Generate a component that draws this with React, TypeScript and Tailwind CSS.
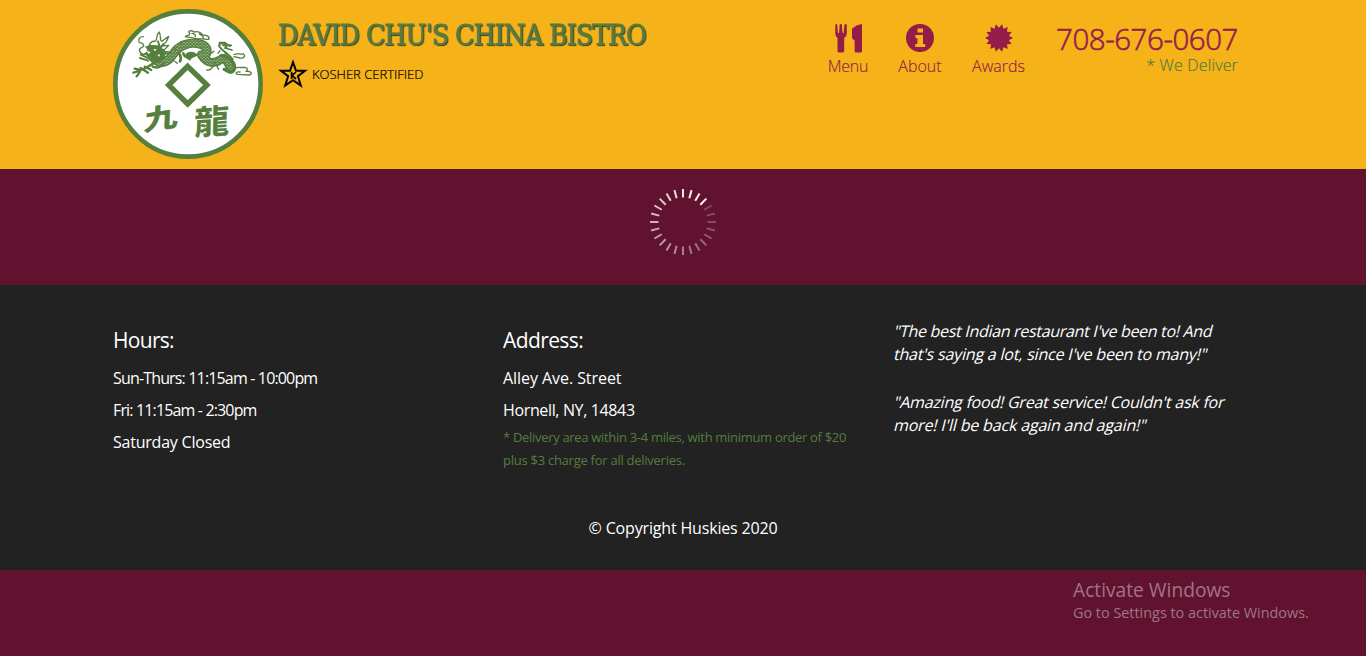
const BODY = 'M128 148 C150 190 178 178 196 150 C212 124 246 112 276 120 C304 128 300 146 288 160';
const TAIL = 'M280 152 C298 182 322 178 336 168 C352 156 362 176 368 196';

function Logo() {
  return (
    <svg className="block h-[150px] w-[150px]" viewBox="15 15 450 450">
      <defs>
        <pattern id="scales" width="10" height="9" patternUnits="userSpaceOnUse">
          <rect width="10" height="9" fill="#567f3e" />
          <circle cx="2.5" cy="2.5" r="1.5" fill="#fff" />
          <circle cx="7.5" cy="7" r="1.5" fill="#fff" />
        </pattern>
      </defs>
      <circle cx="240" cy="240" r="218" fill="#fff" stroke="#567f3e" strokeWidth="14" />
      <g fill="none" stroke="#567f3e" strokeLinecap="round" strokeLinejoin="round">
        <path d={BODY} strokeWidth="28" />
        <path d={TAIL} strokeWidth="27" />
        <path d={BODY} stroke="url(#scales)" strokeWidth="20" />
        <path d={TAIL} stroke="url(#scales)" strokeWidth="18" />
        <path d="M340 154 C366 162 384 176 379 196 C376 206 362 206 348 196" strokeWidth="9" />
        <path d="M374 166 C362 150 344 142 333 126 C336 112 352 116 366 126" strokeWidth="6" />
        <path d="M334 116 l18 0 M344 124 l26 0 M350 132 l22 6 M348 120 l10 14" strokeWidth="5" />
        <path d="M108 152 C92 146 90 134 102 130 C112 126 106 116 94 116 C88 106 96 98 106 98" strokeWidth="4" />
        <path d="M122 128 C126 116 132 110 142 112 C150 106 142 92 154 84 C160 98 154 110 162 112 L182 97 C178 112 170 120 160 126 L182 124 C174 134 168 136 164 142 L184 144" strokeWidth="4" />
        <path d="M114 128 L132 124 L152 126 L172 142 L168 166 L146 176 L128 168 L130 158 L108 150 L122 142 Z" fill="#567f3e" strokeWidth="3" />
        <path d="M98 152 l30 14 M96 162 l24 8 M152 152 l28 -4 M150 112 l6 20 M166 120 l-12 16" strokeWidth="6" />
        <path d="M232 98 C238 94 248 94 244 86 C238 80 250 78 258 84 C270 80 282 88 284 94 C296 92 306 98 302 106 C288 108 272 102 262 104 C252 98 244 102 232 98 Z M252 88 q12 2 10 10 M274 90 q12 4 12 12" strokeWidth="4" />
        <path d="M378 152 C386 146 396 152 406 150 C414 156 408 164 396 162 L378 158 M382 192 C392 188 404 192 410 190 C420 190 420 198 414 202 C428 200 436 210 424 213 L388 211 C380 208 386 202 396 204" strokeWidth="4" />
        <path d="M146 174 C130 176 120 196 94 198 M80 194 l16 4 M76 206 l18 -5 M86 217 l10 -14 M98 192 l22 14 M110 188 l20 10 M134 188 q20 8 32 -10" strokeWidth="7" />
        <path d="M212 146 q10 14 4 26 M226 148 q4 12 12 10" strokeWidth="8" />
        <path d="M318 180 q-6 20 -22 18 M320 174 l12 22 M308 148 l10 -6 M330 148 l6 -8 M348 154 l8 -8 M202 140 l-4 -10 M220 120 l-2 -8 M200 172 l8 6" strokeWidth="4" />
      </g>
      <path d="M230 160 C230 142 256 136 270 154 C260 160 252 160 246 170 Z" fill="#567f3e" />
      <path d="M114 140 l14 4 l-6 6 Z M136 135 l10 1 l-5 6 Z M148 154 l8 -4 l-2 8 Z" fill="#fff" />
      <path d="M239 187 L297 243 L239 300 L182 243 Z" fill="#fff" stroke="#567f3e" strokeWidth="16" />
      <g
        className="font-['Noto_Sans_CJK_TC',sans-serif] text-[104px] font-bold"
        fill="#567f3e"
        stroke="#567f3e"
        strokeLinejoin="round"
      >
        <text transform="translate(107 380) rotate(-9) skewX(-12) scale(.98 .78)" strokeWidth="2.5">
          九
        </text>
        <text transform="translate(258 393) rotate(-4) skewX(-5) scale(1.02 .96)" strokeWidth="0.5">
          龍
        </text>
      </g>
    </svg>
  );
}

function KosherStar() {
  return (
    <svg className="h-[30px] w-[30px] shrink-0" viewBox="0 0 30 30">
      <path
        d="M15 3.2 L18 11.8 H27 L19.9 17.2 L22.8 26.6 L15 21.2 L7.2 26.6 L10.1 17.2 L3 11.8 H12 Z"
        fill="none"
        stroke="#000"
        strokeWidth="2"
      />
      <path d="M13.6 12.8 V20 M18 13.2 L14 16.4 L18 20" fill="none" stroke="#000" strokeWidth="1.7" />
    </svg>
  );
}

function CutleryIcon() {
  return (
    <svg className="h-[30px] w-[28px]" viewBox="0 0 28 30" fill="#951c49">
      <path d="M0.3 1.5 Q1.2 .5 2.2 1.5 L2.9 9.8 Q3.5 10.6 4.1 9.8 L4.7 1.5 Q5.8 .5 6.9 1.5 L7.5 9.8 Q8.1 10.6 8.7 9.8 L9.5 1.5 Q10.6 .5 11.8 1.5 V11 Q11.8 13.6 9.2 15 V28 Q9.2 29.5 7.6 29.5 H4 Q2.5 29.5 2.5 28 V15 Q.3 13.6 .3 11 Z" />
      <path d="M17.4 5.2 Q22 1.5 27 1 V28.2 Q27 29.5 25.5 29.5 H21 Q19.6 29.5 19.6 28 V17.8 L17 15.3 V6.5 Z" />
    </svg>
  );
}

function InfoIcon() {
  return (
    <svg className="h-[30px] w-[28px]" viewBox="0 0 28 30">
      <circle cx="14" cy="15" r="14" fill="#951c49" />
      <path d="M11.5 5.6 H17 V9.6 H11.5 Z M9.4 12 H17 V21 H19.2 V24 H9.2 V21 H11.4 V15 H9.4 Z" fill="#f6b319" />
    </svg>
  );
}

function AwardIcon() {
  const points = Array.from({ length: 28 }, (_, i) => {
    const angle = (i * Math.PI) / 14;
    const radius = i % 2 ? 14 : 10.2;
    return `${(14 + radius * Math.sin(angle)).toFixed(2)},${(15 - radius * Math.cos(angle)).toFixed(2)}`;
  }).join(' ');
  return (
    <svg className="h-[30px] w-[28px]" viewBox="0 0 28 30">
      <polygon points={points} fill="#951c49" />
    </svg>
  );
}

function Spinner() {
  return (
    <svg className="h-[68px] w-[68px]" viewBox="-34 -34 68 68">
      {Array.from({ length: 24 }, (_, i) => (
        <line
          key={i}
          y1={-24.5}
          y2={-33}
          stroke="#fff"
          strokeWidth="2"
          transform={`rotate(${45 - i * 15})`}
          opacity={Math.max(0.24, 1 - i * 0.036)}
        />
      ))}
    </svg>
  );
}

export default function App() {
  return (
    <div className="flex h-[656px] w-[1366px] flex-col overflow-hidden bg-[#61122f] font-['Open_Sans',sans-serif] text-base">
      <header className="flex h-[169px] shrink-0 items-start bg-[#f6b319] pl-[113px]">
        <div className="pt-[9px]">
          <Logo />
        </div>
        <div className="w-[552px] pt-[18px] pl-[15px]">
          <h1 className="font-['DejaVu_Serif_Condensed','DejaVu_Serif',serif] text-[28px] leading-9 tracking-[-0.91px] whitespace-nowrap text-[#557c3e] [-webkit-text-stroke:0.9px_#557c3e] [font-stretch:condensed] [text-shadow:1px_1px_1px_#222]">
            DAVID CHU'S CHINA BISTRO
          </h1>
          <div className="flex items-center gap-[4px] pt-[5px] text-[13px] font-light text-black [-webkit-text-stroke:0.2px]">
            <KosherStar />
            <span className="pt-px">KOSHER CERTIFIED</span>
          </div>
        </div>
        <nav className="flex text-center leading-5 font-light text-[#951c49] [-webkit-text-stroke:0.15px]">
          <a className="flex w-[66px] flex-col items-center pt-[23px] text-[16px] tracking-[-0.2px]">
            <div className="pl-[2px]">
              <CutleryIcon />
            </div>
            <span className="pt-[3px]">Menu</span>
          </a>
          <a className="flex w-[78px] flex-col items-center pt-[23px] text-[16px]">
            <InfoIcon />
            <span className="pt-[3px]">About</span>
          </a>
          <a className="flex w-[79px] flex-col items-center pt-[23px] text-[16px]">
            <AwardIcon />
            <span className="pt-[3px]">Awards</span>
          </a>
        </nav>
        <div className="w-[200px] pt-[19px] text-right whitespace-nowrap">
          <div className="text-[29.5px] leading-[40px] font-light tracking-[-0.45px] text-[#951c49] [-webkit-text-stroke:0.6px]">
            708-676-0607
          </div>
          <div className="-mt-[4px] text-[16px] leading-5 font-light tracking-[0.15px] text-[#557c3e] [-webkit-text-stroke:0.2px]">
            * We Deliver
          </div>
        </div>
      </header>

      <main className="flex h-[116px] shrink-0 justify-center pt-[19px]">
        <Spinner />
      </main>

      <footer className="h-[285px] shrink-0 bg-[#222] pl-[113px] text-white">
        <div className="flex h-[228px] whitespace-nowrap">
          <section className="w-[390px] pt-[43px]">
            <h2 className="text-[21px] leading-6 tracking-[-0.7px]">Hours:</h2>
            <p className="pt-[10px] leading-8 tracking-[-0.84px]">Sun-Thurs: 11:15am - 10:00pm</p>
            <p className="leading-8 tracking-[-0.85px]">Fri: 11:15am - 2:30pm</p>
            <p className="leading-8 tracking-[-0.22px]">Saturday Closed</p>
          </section>
          <section className="w-[390px] pt-[43px]">
            <h2 className="text-[21px] leading-6 tracking-[-0.6px]">Address:</h2>
            <p className="pt-[10px] leading-8 tracking-[-0.06px]">Alley Ave. Street</p>
            <p className="leading-8 tracking-[-0.36px]">Hornell, NY, 14843</p>
            <p className="text-[13px] leading-[23px] tracking-[-0.31px] text-[#557c3e]">
              <span className="block">* Delivery area within 3-4 miles, with minimum order of $20</span>
              <span className="block tracking-[-0.26px]">plus $3 charge for all deliveries.</span>
            </p>
          </section>
          <section className="pt-[35px] leading-[23px]">
            <p>
              <span className="block w-fit origin-[0_17px] -skew-x-14 tracking-[-0.31px]">
                "The best Indian restaurant I've been to! And
              </span>
              <span className="block w-fit origin-[0_17px] -skew-x-14 tracking-[-0.2px]">
                that's saying a lot, since I've been to many!"
              </span>
            </p>
            <p className="pt-[25px]">
              <span className="block w-fit origin-[0_17px] -skew-x-14 tracking-[-0.22px]">
                "Amazing food! Great service! Couldn't ask for
              </span>
              <span className="block w-fit origin-[0_17px] -skew-x-14 tracking-[-0.17px]">
                more! I'll be back again and again!"
              </span>
            </p>
          </section>
        </div>
        <p className="w-[1140px] pt-[3px] text-center leading-6 tracking-[-0.17px]">© Copyright Huskies 2020</p>
      </footer>

      <aside className="pt-[7px] pl-[1073px] whitespace-nowrap text-[#a07488]">
        <p className="text-[19.2px] leading-[26px]">Activate Windows</p>
        <p className="text-[14.4px] leading-5">Go to Settings to activate Windows.</p>
      </aside>
    </div>
  );
}
